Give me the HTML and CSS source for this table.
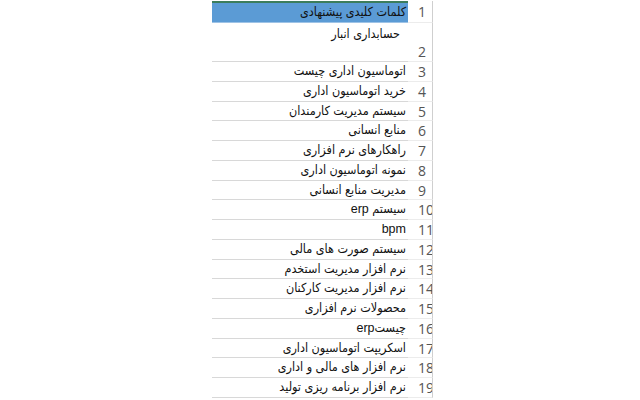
FILE: index.html
```html
<!DOCTYPE html>
<html lang="fa">
<head>
<meta charset="utf-8">
<link rel="stylesheet" href="styles.css">
</head>
<body>
<div class="sheet">
  <div class="row head"><div class="num">1</div><div class="cell">کلمات کلیدی پیشنهادی</div></div>
  <div class="row tall"><div class="num">2</div><div class="cell">حسابداری انبار</div></div>
  <div class="row"><div class="num">3</div><div class="cell">اتوماسیون اداری چیست</div></div>
  <div class="row"><div class="num">4</div><div class="cell">خرید اتوماسیون اداری</div></div>
  <div class="row"><div class="num">5</div><div class="cell">سیستم مدیریت کارمندان</div></div>
  <div class="row"><div class="num">6</div><div class="cell">منابع انسانی</div></div>
  <div class="row"><div class="num">7</div><div class="cell">راهکارهای نرم افزاری</div></div>
  <div class="row"><div class="num">8</div><div class="cell">نمونه اتوماسیون اداری</div></div>
  <div class="row"><div class="num">9</div><div class="cell">مدیریت منابع انسانی</div></div>
  <div class="row"><div class="num">10</div><div class="cell">سیستم erp</div></div>
  <div class="row"><div class="num">11</div><div class="cell">bpm</div></div>
  <div class="row"><div class="num">12</div><div class="cell">سیستم صورت های مالی</div></div>
  <div class="row"><div class="num">13</div><div class="cell">نرم افزار مدیریت استخدم</div></div>
  <div class="row"><div class="num">14</div><div class="cell">نرم افزار مدیریت کارکنان</div></div>
  <div class="row"><div class="num">15</div><div class="cell">محصولات نرم افزاری</div></div>
  <div class="row"><div class="num">16</div><div class="cell">چیستerp</div></div>
  <div class="row"><div class="num">17</div><div class="cell">اسکریپت اتوماسیون اداری</div></div>
  <div class="row"><div class="num">18</div><div class="cell">نرم افزار های مالی و اداری</div></div>
  <div class="row"><div class="num">19</div><div class="cell">نرم افزار برنامه ریزی تولید</div></div>
</div>
</body>
</html>
```
FILE: styles.css
```css
html, body {
  margin: 0;
  padding: 0;
  background: #ffffff;
}
.sheet {
  margin-left: 212px;
  padding-top: 1px;
  width: 221px;
  direction: rtl;
  display: flex;
  flex-direction: column;
  overflow: hidden;
  height: 400px;
}
.row {
  display: grid;
  grid-template-columns: 25px 196px;
  height: 19.75px;
  flex: none;
}
.cell {
  box-sizing: border-box;
  border-bottom: 1px solid #d8d8d8;
  font-family: "Liberation Sans", "DejaVu Sans", sans-serif;
  font-stretch: condensed;
  font-size: 12.5px;
  color: #111;
  text-align: right;
  white-space: nowrap;
  overflow: hidden;
  padding-right: 2px;
  line-height: 19px;
}
.num {
  box-sizing: border-box;
  border-right: 1px solid #cfcfcf;
  border-bottom: 1px solid #ececec;
  direction: ltr;
  text-align: left;
  padding-left: 10px;
  font-family: "Open Sans", "Liberation Sans", sans-serif;
  font-size: 14px;
  color: #555;
  line-height: 20px;
  white-space: nowrap;
  overflow: hidden;
}
.head {
  height: 22px;
}
.head .cell {
  background: #5b9bd5;
  border-top: 2px solid #3c7d5c;
  border-bottom: 1px solid #9ec3e6;
  line-height: 18px;
}
.head .num {
  line-height: 22px;
}
.tall {
  height: 39px;
}
.tall .cell {
  padding-right: 8px;
  padding-top: 2px;
}
.tall .num {
  padding-top: 19px;
}
```
